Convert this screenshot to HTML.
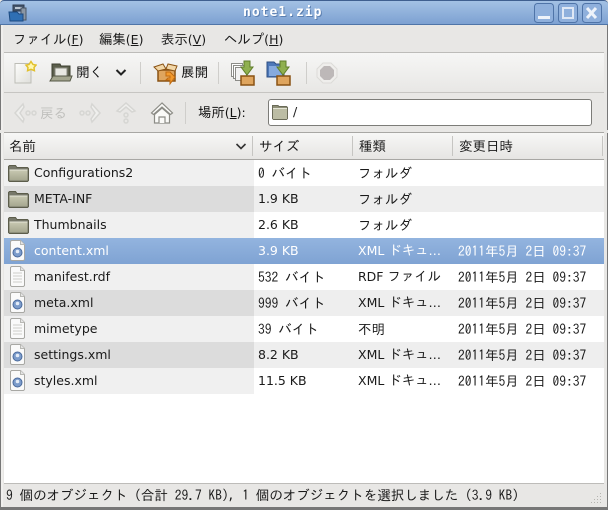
<!DOCTYPE html>
<html><head><meta charset="utf-8"><style>
html,body{margin:0;padding:0}
body{width:608px;height:510px;position:relative;overflow:hidden;background:#e8e7e5;font-family:"DejaVu Sans","IPAGothic",sans-serif;font-size:12.5px;color:#1a1a1a}
.a{position:absolute}
.t{position:absolute;white-space:pre;line-height:16px}
.j{font-family:"IPAGothic","DejaVu Sans",sans-serif;font-size:13.5px}
b{font-weight:normal;font-family:"IPAGothic",sans-serif;font-size:13.4px}
.r{position:absolute;left:4px;width:600px;height:26px}
u{text-decoration:underline}
.sep{position:absolute;width:1px;background:#cfcecb}
</style></head><body>
<div class="a" style="left:0;top:0;width:608px;height:25px;background:linear-gradient(#a3c1e4,#7da1d2);border-top:1px solid #3f5f8f;border-bottom:1px solid #4f75a8;box-sizing:border-box;border-radius:4px 4px 0 0"></div>
<div class="t" style="left:243px;top:5px;color:#fff;font-family:'DejaVu Sans Mono','DejaVu Sans',sans-serif;font-weight:bold;font-size:13px;letter-spacing:1px;text-shadow:1px 1px 0 #5b7fb0">note1.zip</div>
<svg class="a" style="left:8px;top:3px" width="20" height="20" viewBox="0 0 20 20"><rect x="5" y="2" width="11" height="6" fill="#46566c" stroke="#2e3c50"/><rect x="7" y="4" width="7" height="2" fill="#bcc6d2"/><rect x="13" y="5" width="5" height="12" fill="#8a96a4" stroke="#4a5666"/><path d="M1 9h8l2 2h4v7H2z" fill="#2f6fb4" stroke="#1c4a80"/></svg>
<svg class="a" style="left:534px;top:3px" width="70" height="20" viewBox="0 0 70 20" fill="none"><g stroke="#4f74a8"><rect x=".5" y=".5" width="19" height="19" rx="3" fill="#8fb0dc"/><rect x="24.5" y=".5" width="19" height="19" rx="3" fill="#8fb0dc"/><rect x="48.5" y=".5" width="19" height="19" rx="3" fill="#8fb0dc"/></g><rect x="4" y="13" width="12" height="3" fill="#eef3fa"/><rect x="29" y="5" width="10" height="10" stroke="#dfe8f5" stroke-width="2"/><path d="M53 5l9 10M62 5l-9 10" stroke="#eef3fa" stroke-width="3"/></svg>
<div class="a" style="left:0;top:25px;width:3px;height:485px;background:#f0efed;border-left:1px solid #777;box-sizing:border-box"></div>
<div class="a" style="left:604px;top:25px;width:4px;height:485px;background:#e8e7e5;border-right:1px solid #777;box-sizing:border-box"></div>
<div class="a" style="left:0;top:507px;width:608px;height:3px;background:#777"></div>

<div class="t" style="left:13px;top:31px"><b>ファイル</b>(<u>F</u>)</div>
<div class="t" style="left:99px;top:31px"><b>編集</b>(<u>E</u>)</div>
<div class="t" style="left:161px;top:31px"><b>表示</b>(<u>V</u>)</div>
<div class="t" style="left:224px;top:31px"><b>ヘルプ</b>(<u>H</u>)</div>

<div class="a" style="left:4px;top:52px;width:600px;height:41px;background:linear-gradient(#f6f6f5,#e8e7e5);border-top:1px solid #bdbcb9;border-bottom:1px solid #c6c5c2;box-sizing:border-box"></div>
<svg class="a" style="left:13px;top:60px" width="24" height="25"><defs><linearGradient id="pg" x1="0" y1="0" x2="1" y2="1"><stop offset="0" stop-color="#fdfdfb"/><stop offset="1" stop-color="#dededa"/></linearGradient></defs><path d="M2 3.500h16v19.500H2z" fill="url(#pg)" stroke="#bdbdb6"/><path d="M18 1.500l2 3 3 .6-2 2.400.4 3.200-3.400-1.400-3.400 1.400.4-3.200-2-2.400 3-.6z" fill="#fff8b0" stroke="#e2c02c" stroke-width="1.500"/></svg>
<svg class="a" style="left:49px;top:63px" width="24" height="20"><path d="M3 1h8l1 2h9v11H3z" fill="#5c5f4c" stroke="#3d3f30"/><rect x="6" y="5" width="12" height="9" fill="#e8e8e2" stroke="#88887e"/><path d="M4 13h19l-2 5H1z" fill="#a3a58e" stroke="#555745"/></svg>
<div class="t j" style="left:76px;top:64px;color:#111">開く</div>
<svg class="a" style="left:115px;top:68px" width="12" height="9"><path d="M1.500 2l4.500 4.500L10.500 2" fill="none" stroke="#222" stroke-width="2"/></svg>
<div class="sep" style="left:140px;top:62px;height:22px"></div>
<svg class="a" style="left:153px;top:62px" width="26" height="24"><path d="M5 8h17v11H5z" fill="#dfa55e" stroke="#8a5314" stroke-width="1.500"/><path d="M1 5l9-3 3 5-8 2zM24 4l-9-2-2 5 9 2z" fill="#f2d7a8" stroke="#8a5314"/><path d="M13 10h4l5 5-5 7v-4h-4l2-2h2v-2h-4z" fill="#f39a2c" stroke="#c06a10"/></svg>
<div class="t j" style="left:181px;top:64px;color:#111">展開</div>
<div class="sep" style="left:218px;top:62px;height:22px"></div>
<svg class="a" style="left:230px;top:59px" width="26" height="28"><rect x="1.500" y="4.500" width="11" height="13" fill="#fff" stroke="#8c8c88"/><rect x="3.500" y="6.500" width="11" height="13" fill="#fff" stroke="#8c8c88"/><rect x="5.500" y="8.500" width="11" height="13" fill="#f2f2f2" stroke="#8c8c88"/><path d="M11 17h13v9H11z" fill="#dfa55e" stroke="#8a5314" stroke-width="1.500"/><path d="M14 2h6v6h3l-6 8-6-8h3z" fill="#8fb04f" stroke="#5f7d2a"/></svg>
<svg class="a" style="left:266px;top:59px" width="26" height="28"><path d="M1 3h7l2 2h8v13H1z" fill="#4d78b8" stroke="#2f4f84"/><rect x="3" y="7" width="13" height="10" fill="#86aade"/><path d="M11 17h13v9H11z" fill="#dfa55e" stroke="#8a5314" stroke-width="1.500"/><path d="M14 2h6v6h3l-6 8-6-8h3z" fill="#8fb04f" stroke="#5f7d2a"/></svg>
<div class="sep" style="left:306px;top:62px;height:22px"></div>
<svg class="a" style="left:316px;top:62px" width="22" height="22"><path d="M7 1h8l6 6v8l-6 6H7l-6-6V7z" fill="#efeeec" stroke="#dcdbd8"/><path d="M8 4h6l4 4v6l-4 4H8l-4-4V8z" fill="#bdb8b8"/></svg>

<svg class="a" style="left:13px;top:102px" width="26" height="22" fill="none" stroke="#d6d6d3" stroke-width="1.500"><path d="M10 2L2 11l8 9 1-3-4-6 4-6z" fill="#efefed"/><circle cx="15" cy="11" r="2"/><circle cx="21" cy="11" r="2"/></svg>
<div class="t j" style="left:40px;top:105px;color:#c0c0bd">戻る</div>
<svg class="a" style="left:79px;top:102px" width="24" height="22" fill="none" stroke="#d6d6d3" stroke-width="1.500"><path d="M13 2l8 9-8 9-1-3 4-6-4-6z" fill="#efefed"/><circle cx="3" cy="11" r="2"/><circle cx="9" cy="11" r="2"/></svg>
<svg class="a" style="left:115px;top:101px" width="22" height="24" fill="none" stroke="#d6d6d3" stroke-width="1.500"><path d="M11 2l9 8-3 1-6-5-6 5-3-1z" fill="#efefed"/><circle cx="11" cy="14" r="2"/><circle cx="11" cy="20" r="2"/></svg>
<svg class="a" style="left:150px;top:101px" width="24" height="24" fill="#fafaf8" stroke="#8c8c86" stroke-width="1.200"><path d="M12 2L1.500 12l2 1.500L12 6l8.500 7.500 2-1.500z"/><path d="M4.500 13.500L12 7l7.500 6.500V22h-15z"/><path d="M9 22v-6h6v6"/></svg>
<div class="sep" style="left:185px;top:102px;height:22px"></div>
<div class="t" style="left:198px;top:104px;color:#111"><b>場所</b>(<u>L</u>):</div>
<div class="a" style="left:268px;top:99px;width:324px;height:27px;background:#fff;border:1px solid #7c7c78;border-radius:3px;box-sizing:border-box"></div>
<svg class="a" style="left:271px;top:103px" width="18" height="18"><path d="M1.500 2.500v13l1 1h13l1-1v-11l-1-1H8l-1-1z" fill="#8f9078" stroke="#6a6b58"/><path d="M2 6h14v10H2z" fill="#bcbda4"/><path d="M2 5.500h14" stroke="#e4e4d6"/></svg>
<div class="t" style="left:293px;top:104px">/</div>

<div class="a" style="left:0;top:130px;width:608px;height:3px;background:#e8e7e5"></div>
<div class="a" style="left:4px;top:132px;width:600px;height:352px;background:#fff;border-top:1px solid #a8a7a4;box-sizing:border-box"></div>
<div class="a" style="left:4px;top:133px;width:600px;height:27px;background:linear-gradient(#f7f7f6,#e6e5e3);border-bottom:1px solid #a8a7a4;box-sizing:border-box"></div>
<div class="sep" style="left:252px;top:136px;height:20px;background:#c6c5c2"></div>
<div class="sep" style="left:352px;top:136px;height:20px;background:#c6c5c2"></div>
<div class="sep" style="left:452px;top:136px;height:20px;background:#c6c5c2"></div>
<div class="sep" style="left:602px;top:136px;height:20px;background:#c6c5c2"></div>
<div class="t j" style="left:9px;top:138px">名前</div>
<svg class="a" style="left:235px;top:142px" width="12" height="9"><path d="M1.500 2l4.500 4.500L10.500 2" fill="none" stroke="#333" stroke-width="1.600"/></svg>
<div class="t j" style="left:259px;top:138px">サイズ</div>
<div class="t j" style="left:359px;top:138px">種類</div>
<div class="t j" style="left:459px;top:138px">変更日時</div>

<div class="r" style="top:160px;background:#fff"><div class="a" style="left:0;top:0;width:250px;height:26px;background:#f0f0f0"></div></div>
<div class="r" style="top:186px;background:#eeeeee"><div class="a" style="left:0;top:0;width:250px;height:26px;background:#dcdcdc"></div></div>
<div class="r" style="top:212px;background:#fff"><div class="a" style="left:0;top:0;width:250px;height:26px;background:#f0f0f0"></div></div>
<div class="r" style="top:238px;background:linear-gradient(#93b4df,#7fa3d3)"></div>
<div class="r" style="top:264px;background:#fff"><div class="a" style="left:0;top:0;width:250px;height:26px;background:#f0f0f0"></div></div>
<div class="r" style="top:290px;background:#eeeeee"><div class="a" style="left:0;top:0;width:250px;height:26px;background:#dcdcdc"></div></div>
<div class="r" style="top:316px;background:#fff"><div class="a" style="left:0;top:0;width:250px;height:26px;background:#f0f0f0"></div></div>
<div class="r" style="top:342px;background:#eeeeee"><div class="a" style="left:0;top:0;width:250px;height:26px;background:#dcdcdc"></div></div>
<div class="r" style="top:368px;background:#fff"><div class="a" style="left:0;top:0;width:250px;height:26px;background:#f0f0f0"></div></div>

<svg width="0" height="0" class="a"><defs>
<linearGradient id="fg" x1="0" y1="0" x2="0" y2="1"><stop offset="0" stop-color="#c6c7b0"/><stop offset="1" stop-color="#a5a68e"/></linearGradient>
<g id="fo"><path d="M.5 3.500v14l1 1h18l1-1v-12l-1-1H9l-1.500-2H1.500z" fill="#77786a" stroke="#5c5d4b"/><path d="M1.500 7.500h18v10h-18z" fill="url(#fg)"/><path d="M1.500 7h18" stroke="#e6e6d8"/></g>
<g id="xm"><path d="M2.500.5h9l4 4v15l-1 1h-12l-1-1v-18z" fill="#fafafa" stroke="#a8a8a4"/><path d="M11.500.5v4h4" fill="#e4e4e4" stroke="#b8b8b4"/><circle cx="8.500" cy="12.500" r="4.500" fill="#7c9ccb" stroke="#4a6a9c"/><circle cx="8.500" cy="11.500" r="1.800" fill="#e4ecf7"/></g>
<g id="tx"><path d="M2.500.5h9l4 4v15l-1 1h-12l-1-1v-18z" fill="#fafafa" stroke="#a8a8a4"/><path d="M11.500.5v4h4" fill="#e4e4e4" stroke="#b8b8b4"/><path d="M4 7h9M4 10h9M4 13h9M4 16h9" stroke="#cfcfcb"/></g>
</defs></svg>
<svg class="a" style="left:8px;top:163px" width="21" height="20"><use href="#fo"/></svg>
<svg class="a" style="left:8px;top:189px" width="21" height="20"><use href="#fo"/></svg>
<svg class="a" style="left:8px;top:215px" width="21" height="20"><use href="#fo"/></svg>
<svg class="a" style="left:9px;top:240px" width="17" height="22"><use href="#xm"/></svg>
<svg class="a" style="left:9px;top:266px" width="17" height="22"><use href="#tx"/></svg>
<svg class="a" style="left:9px;top:292px" width="17" height="22"><use href="#xm"/></svg>
<svg class="a" style="left:9px;top:318px" width="17" height="22"><use href="#tx"/></svg>
<svg class="a" style="left:9px;top:344px" width="17" height="22"><use href="#xm"/></svg>
<svg class="a" style="left:9px;top:370px" width="17" height="22"><use href="#xm"/></svg>

<div class="t" style="left:34px;top:165px">Configurations2</div>
<div class="t j" style="left:258px;top:165px">0 バイト</div>
<div class="t j" style="left:358px;top:165px">フォルダ</div>
<div class="t" style="left:34px;top:191px">META-INF</div>
<div class="t" style="left:258px;top:191px">1.9 KB</div>
<div class="t j" style="left:358px;top:191px">フォルダ</div>
<div class="t" style="left:34px;top:217px">Thumbnails</div>
<div class="t" style="left:258px;top:217px">2.6 KB</div>
<div class="t j" style="left:358px;top:217px">フォルダ</div>
<div class="t" style="left:34px;top:243px;color:#fff">content.xml</div>
<div class="t" style="left:258px;top:243px;color:#fff">3.9 KB</div>
<div class="t" style="left:358px;top:242px;color:#fff">XML <b>ドキュ</b>…</div>
<div class="t j" style="left:458px;top:243px;color:#fff">2011年5月 2日 09:37</div>
<div class="t" style="left:34px;top:269px">manifest.rdf</div>
<div class="t j" style="left:258px;top:269px">532 バイト</div>
<div class="t" style="left:358px;top:268px">RDF <b>ファイル</b></div>
<div class="t j" style="left:458px;top:269px">2011年5月 2日 09:37</div>
<div class="t" style="left:34px;top:295px">meta.xml</div>
<div class="t j" style="left:258px;top:295px">999 バイト</div>
<div class="t" style="left:358px;top:294px">XML <b>ドキュ</b>…</div>
<div class="t j" style="left:458px;top:295px">2011年5月 2日 09:37</div>
<div class="t" style="left:34px;top:321px">mimetype</div>
<div class="t j" style="left:258px;top:321px">39 バイト</div>
<div class="t j" style="left:358px;top:321px">不明</div>
<div class="t j" style="left:458px;top:321px">2011年5月 2日 09:37</div>
<div class="t" style="left:34px;top:347px">settings.xml</div>
<div class="t" style="left:258px;top:347px">8.2 KB</div>
<div class="t" style="left:358px;top:346px">XML <b>ドキュ</b>…</div>
<div class="t j" style="left:458px;top:347px">2011年5月 2日 09:37</div>
<div class="t" style="left:34px;top:373px">styles.xml</div>
<div class="t" style="left:258px;top:373px">11.5 KB</div>
<div class="t" style="left:358px;top:372px">XML <b>ドキュ</b>…</div>
<div class="t j" style="left:458px;top:373px">2011年5月 2日 09:37</div>

<div class="a" style="left:4px;top:483px;width:600px;height:24px;background:#e8e7e5;border-top:1px solid #bdbcb9;box-sizing:border-box"></div>
<div class="t j" style="left:6px;top:487px">9 個のオブジェクト (合計 29.7 KB), 1 個のオブジェクトを選択しました (3.9 KB)</div>
<svg class="a" style="left:590px;top:492px" width="14" height="14" fill="#b5b4b0"><rect x="10" y="1" width="1" height="1"/><rect x="7" y="4" width="1" height="1"/><rect x="10" y="4" width="1" height="1"/><rect x="4" y="7" width="1" height="1"/><rect x="7" y="7" width="1" height="1"/><rect x="10" y="7" width="1" height="1"/><rect x="1" y="10" width="1" height="1"/><rect x="4" y="10" width="1" height="1"/><rect x="7" y="10" width="1" height="1"/><rect x="10" y="10" width="1" height="1"/></svg>
</body></html>
